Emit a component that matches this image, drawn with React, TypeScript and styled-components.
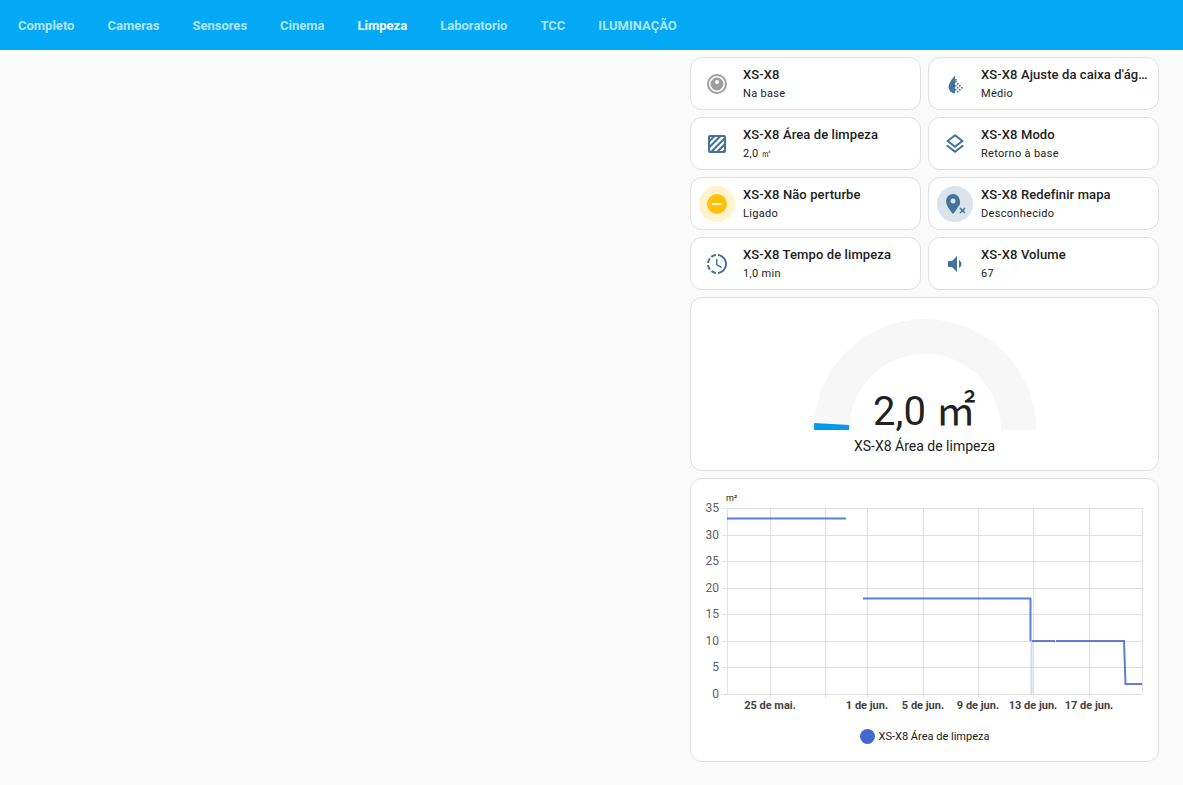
import React from "react";
import styled, { createGlobalStyle } from "styled-components";

const GlobalStyle = createGlobalStyle`
  html, body {
    margin: 0;
    padding: 0;
    background: #fafafa;
    font-family: Roboto, "Noto Sans", sans-serif;
  }
`;

const Header = styled.header`
  height: 50px;
  background: #03a9f4;
  display: flex;
  align-items: center;
  padding-left: 18px;
  gap: 33px;
`;

const Tab = styled.div<{ $active?: boolean }>`
  font-size: 13px;
  font-weight: 700;
  color: ${(p) => (p.$active ? "#ffffff" : "rgba(255, 255, 255, 0.7)")};
`;

const Main = styled.main`
  display: grid;
  grid-template-columns: 469px;
  justify-content: end;
  padding: 7px 24px 0 0;
  gap: 7px;
`;

const Tiles = styled.div`
  display: grid;
  grid-template-columns: 231px 231px;
  grid-auto-rows: 53px;
  gap: 7px;
`;

const Card = styled.div`
  background: #ffffff;
  border: 1px solid #e0e0e0;
  border-radius: 12px;
  box-sizing: border-box;
`;

const Tile = styled(Card)`
  display: flex;
  align-items: center;
  padding-left: 8px;
  gap: 8px;
  min-width: 0;
`;

const IconBox = styled.div<{ $bg?: string; $color: string }>`
  width: 36px;
  height: 36px;
  flex: none;
  border-radius: 50%;
  background: ${(p) => p.$bg ?? "transparent"};
  color: ${(p) => p.$color};
  display: flex;
  align-items: center;
  justify-content: center;
`;

const TileText = styled.div`
  min-width: 0;
  padding-right: 8px;
  display: flex;
  flex-direction: column;
  gap: 2px;
`;

const TileName = styled.div`
  font-size: 13px;
  font-weight: 500;
  line-height: 18px;
  color: #212121;
  letter-spacing: 0.1px;
  white-space: nowrap;
  overflow: hidden;
  text-overflow: ellipsis;
`;

const TileState = styled.div`
  font-size: 11px;
  line-height: 15px;
  color: #212121;
  letter-spacing: 0.3px;
`;

const GaugeCard = styled(Card)`
  height: 174px;
  display: flex;
  flex-direction: column;
  align-items: center;
  padding-top: 21px;
`;

const GaugeWrap = styled.div`
  position: relative;
  width: 222px;
  height: 111px;
`;

const GaugeValue = styled.div`
  position: absolute;
  left: 0;
  right: 0;
  bottom: -6px;
  text-align: center;
  font-family: Roboto, "Noto Sans CJK SC", sans-serif;
  font-size: 40px;
  line-height: 48px;
  color: #212121;
`;

const GaugeName = styled.div`
  margin-top: 8px;
  font-size: 14px;
  line-height: 17px;
  color: #212121;
`;

const ChartCard = styled(Card)`
  height: 284px;
`;

const ChartSvg = styled.svg`
  display: block;
  font-family: Roboto, sans-serif;
`;

const Legend = styled.div`
  margin-top: 11px;
  display: flex;
  align-items: center;
  justify-content: center;
  gap: 4px;
  font-size: 11px;
  color: #212121;
`;

const LegendDot = styled.span`
  width: 15px;
  height: 15px;
  border-radius: 50%;
  background: #4269d0;
`;

const Mdi = ({ d }: { d: string }) => (
  <svg width="24" height="24" viewBox="0 0 24 24" fill="currentColor">
    <path d={d} />
  </svg>
);

const VacuumIcon = () => (
  <svg width="24" height="24" viewBox="0 0 24 24" fill="currentColor">
    <path fillRule="evenodd" d="M12 2a10 10 0 1 0 0 20 10 10 0 0 0 0-20Zm0 2a8 8 0 1 1 0 16 8 8 0 0 1 0-16Z" />
    <path fillRule="evenodd" d="M12 5.5a6.5 6.5 0 1 0 0 13 6.5 6.5 0 0 0 0-13Zm0 2.5a2 2 0 1 1 0 4 2 2 0 0 1 0-4Z" />
  </svg>
);

const WaterIcon = () => (
  <svg width="24" height="24" viewBox="0 0 24 24" fill="currentColor">
    <path d="M12 3.5C12 3.5 5.5 10.5 5.5 15a6.5 6.5 0 0 0 6.5 6.5Z" />
    {[
      [12, 9], [14, 11], [12, 13], [14, 15], [16, 13], [12, 17], [16, 17], [14, 19], [12, 7], [18, 15],
    ].map(([x, y]) => (
      <rect key={`${x}-${y}`} x={x} y={y} width="1.6" height="1.6" />
    ))}
  </svg>
);

const TextureBoxIcon = () => (
  <svg width="24" height="24" viewBox="0 0 24 24" fill="currentColor">
    <path fillRule="evenodd" d="M5 3h14a2 2 0 0 1 2 2v14a2 2 0 0 1-2 2H5a2 2 0 0 1-2-2V5a2 2 0 0 1 2-2Zm0 2v2.2L7.2 5Zm5 0L5 10v3L13 5Zm6 0L5 16v3h.5L19 5.5V5Zm3 3.5L8.500 19h3L19 11.500Zm0 6L14.500 19h3L19 17.500Z" />
  </svg>
);

const tiles = [
  { name: "XS-X8", state: "Na base", color: "#9e9e9e", icon: <VacuumIcon /> },
  { name: "XS-X8 Ajuste da caixa d'água", state: "Médio", color: "#44739e", icon: <WaterIcon /> },
  { name: "XS-X8 Área de limpeza", state: "2,0 ㎡", color: "#44739e", icon: <TextureBoxIcon /> },
  {
    name: "XS-X8 Modo",
    state: "Retorno à base",
    color: "#44739e",
    icon: <Mdi d="M12,18.54L19.37,12.8L21,14.07L12,21.07L3,14.07L4.62,12.81L12,18.54M12,16L3,9L12,2L21,9L12,16M12,4.53L6.26,9L12,13.47L17.74,9L12,4.53Z" />,
  },
  {
    name: "XS-X8 Não perturbe",
    state: "Ligado",
    color: "#ffc107",
    bg: "rgba(255, 193, 7, 0.2)",
    icon: <Mdi d="M17,13H7V11H17M12,2A10,10 0 0,0 2,12A10,10 0 0,0 12,22A10,10 0 0,0 22,12A10,10 0 0,0 12,2Z" />,
  },
  {
    name: "XS-X8 Redefinir mapa",
    state: "Desconhecido",
    color: "#44739e",
    bg: "rgba(68, 115, 158, 0.2)",
    icon: <Mdi d="M10 2a7 7 0 0 0-7 7c0 5.250 7 13 7 13s3-3.300 5-7a6.500 6.500 0 0 0 1.900-6A7 7 0 0 0 10 2Zm0 4.500a2.500 2.500 0 1 1 0 5 2.500 2.500 0 0 1 0-5ZM17.600 15.500 19.500 17.400 21.400 15.500 22.500 16.600 20.600 18.500 22.500 20.400 21.400 21.500 19.500 19.600 17.600 21.500 16.500 20.400 18.400 18.500 16.500 16.600Z" />,
  },
  {
    name: "XS-X8 Tempo de limpeza",
    state: "1,0 min",
    color: "#44739e",
    icon: <Mdi d="M13,2.03V2.05L13,4.05C17.39,4.59 20.5,8.58 19.96,12.97C19.5,16.61 16.64,19.5 13,19.93V21.93C18.5,21.38 22.5,16.5 21.95,11C21.5,6.25 17.73,2.5 13,2.03M11,2.06C9.05,2.25 7.19,3 5.67,4.26L7.1,5.74C8.22,4.84 9.57,4.26 11,4.06V2.06M4.26,5.67C3,7.19 2.25,9.04 2.05,11H4.05C4.24,9.58 4.8,8.23 5.69,7.1L4.26,5.67M2.06,13C2.26,14.96 3.03,16.81 4.27,18.33L5.69,16.9C4.81,15.77 4.24,14.42 4.06,13H2.06M7.1,18.37L5.67,19.74C7.18,21 9.04,21.79 11,22V20C9.58,19.82 8.23,19.25 7.1,18.37M12.5,7V12.25L17,14.92L16.25,16.15L11,13V7H12.5Z" />,
  },
  {
    name: "XS-X8 Volume",
    state: "67",
    color: "#44739e",
    icon: <Mdi d="M5,9V15H9L14,20V4L9,9M18.5,12C18.5,10.23 17.5,8.71 16,7.97V16C17.5,15.29 18.5,13.76 18.5,12Z" />,
  },
];

const tabs = ["Completo", "Cameras", "Sensores", "Cinema", "Limpeza", "Laboratorio", "TCC", "ILUMINAÇÃO"];

const yTicks = [
  { label: "35", y: 508 },
  { label: "30", y: 535 },
  { label: "25", y: 561 },
  { label: "20", y: 588 },
  { label: "15", y: 614 },
  { label: "10", y: 641 },
  { label: "5", y: 667 },
  { label: "0", y: 694 },
];
const xLines = [727, 770, 825, 867, 923, 978, 1033, 1089, 1142];
const xLabels = [
  { label: "25 de mai.", x: 770 },
  { label: "1 de jun.", x: 867 },
  { label: "5 de jun.", x: 923 },
  { label: "9 de jun.", x: 978 },
  { label: "13 de jun.", x: 1033 },
  { label: "17 de jun.", x: 1089 },
];

const Chart = () => (
  // viewBox is in page pixels, the card's inner box starts at 691,479
  <ChartSvg width="467" height="239" viewBox="691 479 467 239">
    <text x="726" y="501" fontSize="9" fill="#212121">m²</text>
    {yTicks.map((t) => (
      <g key={t.label}>
        <line x1="722" x2="1142" y1={t.y + 0.5} y2={t.y + 0.5} stroke="#e0e0e0" />
        <text x="719" y={t.y + 4} fontSize="12" fill="#616161" textAnchor="end">{t.label}</text>
      </g>
    ))}
    {xLines.map((x) => (
      <line key={x} x1={x + 0.5} x2={x + 0.5} y1="508" y2={x === 727 || x === 1142 ? 694 : 698} stroke="#e0e0e0" />
    ))}
    {xLabels.map((t) => (
      <text key={t.label} x={t.x} y="709" fontSize="11" fontWeight="700" fill="#424242" textAnchor="middle">{t.label}</text>
    ))}
    <g fill="none" stroke="#4269d0" strokeWidth="2" opacity="0.85">
      <path d="M727 518.500H846" />
      <path d="M863 598.500H1030.500V641" />
      <path d="M1032 641H1055M1056 641H1124L1125.500 684H1142" />
    </g>
    <line x1="1031.500" x2="1031.500" y1="641" y2="694" stroke="#4269d0" strokeWidth="2" opacity="0.25" />
  </ChartSvg>
);

const App: React.FC = () => {
  return (
    <>
      <GlobalStyle />
      <Header>
        {tabs.map((tab) => (
          <Tab key={tab} $active={tab === "Limpeza"}>{tab}</Tab>
        ))}
      </Header>
      <Main>
        <Tiles>
          {tiles.map((t) => (
            <Tile key={t.name}>
              <IconBox $color={t.color} $bg={t.bg}>{t.icon}</IconBox>
              <TileText>
                <TileName>{t.name}</TileName>
                <TileState>{t.state}</TileState>
              </TileText>
            </Tile>
          ))}
        </Tiles>
        <GaugeCard>
          <GaugeWrap>
            <svg width="222" height="111" viewBox="0 0 222 111">
              <path d="M0 111A111 111 0 0 1 222 111H187A76 76 0 0 0 35 111Z" fill="#f7f7f7" />
              <path d="M0 111A111 111 0 0 1 0.200 104L35.200 106A76 76 0 0 0 35 111Z" fill="#039be5" />
            </svg>
            <GaugeValue>2,0 ㎡</GaugeValue>
          </GaugeWrap>
          <GaugeName>XS-X8 Área de limpeza</GaugeName>
        </GaugeCard>
        <ChartCard>
          <Chart />
          <Legend>
            <LegendDot />
            XS-X8 Área de limpeza
          </Legend>
        </ChartCard>
      </Main>
    </>
  );
};

export default App;
